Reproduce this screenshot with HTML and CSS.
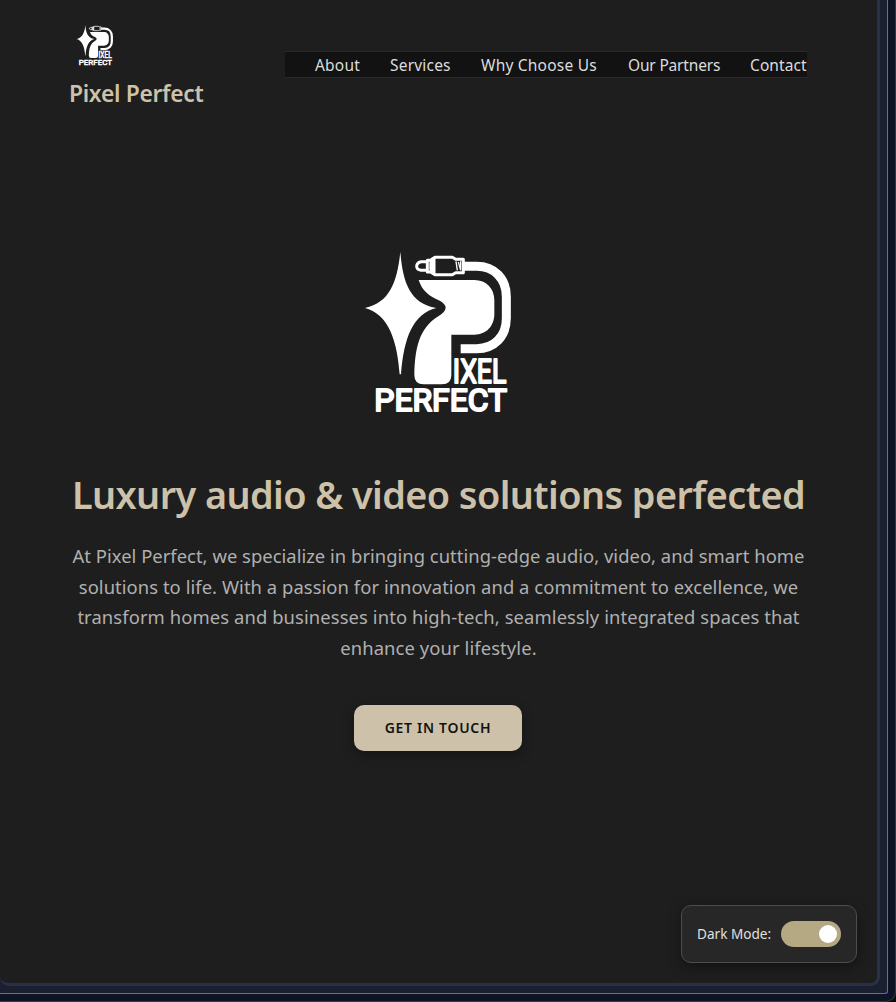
FILE: index.html
```html
<!DOCTYPE html>
<html lang="en">
<head>
<meta charset="utf-8">
<title>Pixel Perfect</title>
<link rel="stylesheet" href="styles.css">
</head>
<body>
<svg class="sprite" aria-hidden="true">
  <symbol id="logo" viewBox="0 0 510 540">
    <path fill="#fff" d="M136 35C143 124 163 190 244 204C173 222 147 293 138 403H134C127 310 105 224 30 204C105 188 127 124 136 35Z"/>
    <path fill="#fff" d="M191 120H358C394 120 418 145 418 181V222C418 258 394 284 358 284H289V405Q289 433 261 433H206Q178 433 178 405C180 324 192 265 250 229Q272 216 272 202Q270 191 256 183C220 167 202 153 191 120Z"/>
    <path fill="none" stroke="#fff" stroke-width="27" d="M326 79H365C418 79 454 116 454 170V235C454 289 418 326 365 326H317"/>
    <path fill="none" stroke="#fff" stroke-width="9" stroke-linejoin="round" d="M216 65H198Q185 68 185 79Q185 89 198 91H216M217 61H228V96H217ZM230 58L240 52H292L302 58H325V98H302L292 104H240L230 98ZM237 56V101"/>
    <path fill="none" stroke="#fff" stroke-width="4" d="M226 70V88M303 64L307 91M310 66L317 91V64"/>
    <g class="logo-type">
      <text x="293" y="430" font-size="102" textLength="161" lengthAdjust="spacingAndGlyphs">IXEL</text>
      <text x="58" y="512" font-size="95" textLength="398" lengthAdjust="spacingAndGlyphs">PERFECT</text>
    </g>
  </symbol>
</svg>
<div class="desk"><div class="frame"><main class="page">
  <header class="header">
    <div class="brand">
      <svg class="brand-logo"><use href="#logo"/></svg>
      <span class="brand-name">Pixel Perfect</span>
    </div>
    <nav class="nav">
      <a class="about">About</a><a class="services">Services</a><a class="why">Why Choose Us</a><a class="partners">Our Partners</a><a class="contact">Contact</a>
    </nav>
  </header>
  <section class="hero">
    <svg class="hero-logo"><use href="#logo"/></svg>
    <h1>Luxury audio &amp; video solutions perfected</h1>
    <p><span class="line-a">At Pixel Perfect, we specialize in bringing cutting-edge audio, video, and smart home</span><br><span class="line-b">solutions to life. With a passion for innovation and a commitment to excellence, we</span><br><span class="line-c">transform homes and businesses into high-tech, seamlessly integrated spaces that</span><br><span class="line-c">enhance your lifestyle.</span></p>
    <a class="cta">GET IN TOUCH</a>
  </section>
  <aside class="mode"><span class="mode-label">Dark Mode:</span><span class="switch"><span class="knob"></span></span></aside>
</main></div></div>
</body>
</html>
```
FILE: styles.css
```css
* { box-sizing: border-box; }
body {
  margin: 0;
  width: 896px;
  height: 1002px;
  overflow: hidden;
  background: #080a0c;
  font-family: "Noto Sans", "Open Sans", sans-serif;
}
.sprite { position: absolute; width: 0; height: 0; }
.desk {
  width: 896px;
  height: 1002px;
  padding: 0 7px 7px 0;
  background: #0f1424;
  border: solid #34383f;
  border-width: 0 1px 1px 0;
  border-bottom-right-radius: 10px;
}
.frame {
  height: 994px;
  padding: 0 7px 7px 0;
  background: #1b2030;
  border: solid #6e5ae0;
  border-width: 0 1px 1px 0;
  border-bottom-right-radius: 3px;
}
.page {
  height: 986px;
  display: flex;
  flex-direction: column;
  background: #1e1e1e;
  border: solid #2a3045;
  border-width: 0 3px 3px 0;
  border-radius: 0 0 9px 9px;
}
.header {
  display: flex;
  justify-content: space-between;
  height: 130px;
  padding: 22px 70px 0 69px;
}
.brand { display: flex; flex-direction: column; align-items: flex-start; }
.brand-logo { width: 42.5px; height: 45px; margin-left: 4.5px; }
.brand-name {
  margin-top: 10px;
  font-size: 22.8px;
  line-height: 34px;
  font-weight: 600;
  letter-spacing: -.3px;
  color: #cdc2a9;
  white-space: nowrap;
}
.nav {
  display: flex;
  gap: 30px;
  width: 522px;
  height: 27px;
  margin-top: 29px;
  padding-left: 30px;
  background: #121212;
  border: solid #2a2a2a;
  border-width: 1px 0;
  color: #dcdcdc;
  font-size: 15.5px;
  line-height: 26px;
  white-space: nowrap;
}
.about { width: 45px; letter-spacing: .2px; }
.services { width: 61px; letter-spacing: .2px; }
.why { width: 117px; letter-spacing: .22px; }
.partners { width: 92px; letter-spacing: -.18px; }
.contact { width: 57px; letter-spacing: .1px; }
.hero {
  display: flex;
  flex-direction: column;
  align-items: center;
  padding-top: 110px;
}
.hero-logo { width: 170px; height: 180px; margin-left: 3px; }
.logo-type {
  fill: #fff;
  stroke: #fff;
  stroke-width: 6;
  stroke-linejoin: round;
  font-family: Roboto, sans-serif;
  font-weight: 400;
}
h1 {
  margin: 49px 0 0;
  font-size: 37.8px;
  line-height: 52px;
  font-weight: 600;
  letter-spacing: -.57px;
  color: #cdc2a9;
  white-space: nowrap;
}
p {
  margin: 20px 0 0;
  font-size: 18.4px;
  line-height: 30.7px;
  text-align: center;
  color: #b0b0b0;
  white-space: nowrap;
}
.line-a { letter-spacing: .03px; }
.line-b { letter-spacing: .06px; }
.line-c { letter-spacing: .1px; }
.cta {
  width: 168px;
  height: 46px;
  margin: 41px 1px 0 0;
  border-radius: 10px;
  background: #cdc2a9;
  box-shadow: 0 4px 12px rgba(0, 0, 0, .35);
  color: #121212;
  font-size: 14px;
  font-weight: 600;
  line-height: 46px;
  text-align: center;
  letter-spacing: .7px;
}
.mode {
  display: flex;
  align-items: center;
  justify-content: space-between;
  width: 176px;
  height: 58px;
  margin: auto 20px 20px auto;
  padding: 0 15px;
  border: 1px solid #4d4d4d;
  border-radius: 10px;
  background: #272727;
  box-shadow: 0 4px 14px rgba(0, 0, 0, .4);
}
.mode-label {
  padding-bottom: 1px;
  color: #e0e0e0;
  font-size: 13.6px;
  white-space: nowrap;
}
.switch {
  display: flex;
  align-items: center;
  justify-content: flex-end;
  width: 60px;
  height: 26px;
  padding: 4px;
  border-radius: 13px;
  background: #b4a983;
}
.knob { width: 18px; height: 18px; border-radius: 50%; background: #fff; }
```
